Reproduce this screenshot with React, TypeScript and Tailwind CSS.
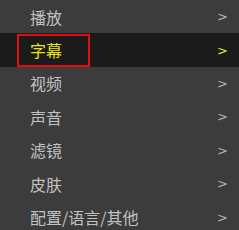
import React from "react";

const items = ["播放", "字幕", "视频", "声音", "滤镜", "皮肤", "配置/语言/其他"];

export default function App() {
  return (
    <div
      className="w-[239px] h-[230px] overflow-hidden bg-[#3c3c3c] flex flex-col"
      style={{ fontFamily: '"Noto Sans CJK SC", "Noto Sans", sans-serif' }}
    >
      {items.map((label, i) => {
        const active = i === 1;
        return (
          <div
            key={label}
            className={`h-[33.4px] shrink-0 flex items-center pl-[17px] pr-[11px] ${
              active ? "bg-[#1b1b1b] text-[#ebe21a]" : "text-[#c2c2c2]"
            }`}
          >
            <span
              className={`h-[33px] flex items-center pl-[11px] border-2 whitespace-nowrap text-[16px] leading-none ${
                active ? "w-[73px] border-[#e40c0c]" : "border-transparent"
              }`}
            >
              {label}
            </span>
            <span
              className={`ml-auto text-[13px] leading-none ${active ? "" : "text-[#b4b4b4]"}`}
              style={{ fontFamily: '"DejaVu Sans", sans-serif' }}
            >
              &gt;
            </span>
          </div>
        );
      })}
    </div>
  );
}
